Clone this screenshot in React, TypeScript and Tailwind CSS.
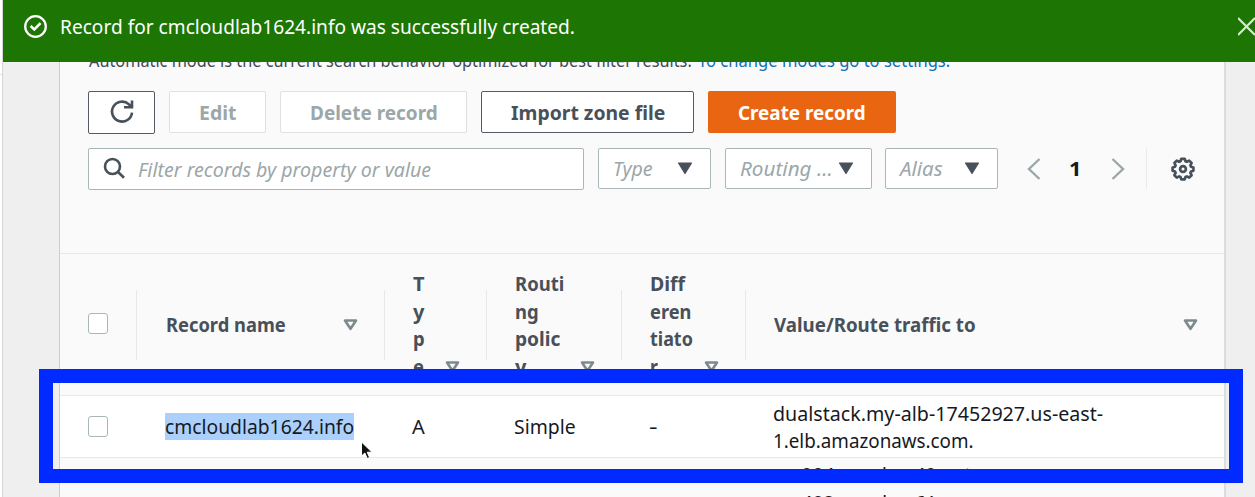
import React from "react";

// Text condensed or widened to an exact advance width so lines keep their measure.
function T({ w, children, className = "" }: { w: number; children: string; className?: string }) {
  const ref = React.useRef<HTMLSpanElement>(null);
  const [scale, setScale] = React.useState(1);
  React.useLayoutEffect(() => {
    if (ref.current) setScale(w / ref.current.offsetWidth);
  }, [w, children]);
  return (
    <span className={`block shrink-0 text-left ${className}`} style={{ width: w }}>
      <span ref={ref} className="inline-block origin-left whitespace-pre align-top" style={{ transform: `scaleX(${scale})` }}>
        {children}
      </span>
    </span>
  );
}

function Caret({ className = "" }: { className?: string }) {
  return (
    <svg className={`shrink-0 ${className}`} width="16" height="13" viewBox="0 0 16 13">
      <path d="M1.500 1h13L8 11.500z" fill="#485059" stroke="#485059" strokeWidth="1.2" strokeLinejoin="round" />
    </svg>
  );
}

function Sort() {
  return (
    <svg className="shrink-0" width="15" height="12" viewBox="0 0 15 12">
      <path d="M2 1.500h11L7.500 9.800z" fill="none" stroke="#7d8a8b" strokeWidth="2.600" strokeLinejoin="round" />
    </svg>
  );
}

function Checkbox() {
  return <span className="block h-[21px] w-5 rounded-[3px] border-[1.5px] border-[#aab7b8] bg-white" />;
}

function Filter({ label, w, className }: { label: string; w: number; className: string }) {
  return (
    <div className={`flex h-[41px] items-center justify-between rounded-[2px] border border-[#aab7b8] bg-white pl-[14px] pr-[17px] text-[20px] italic text-[#9ba7a8] ${className}`}>
      <T w={w}>{label}</T>
      <Caret />
    </div>
  );
}

function Heading({ lines, className }: { lines: [string, number][]; className: string }) {
  return (
    <div className={`flex h-[141px] justify-between pt-[16px] ${className}`}>
      <div className="flex flex-col leading-[27.7px]">
        {lines.map(([t, w]) => <T key={t} w={w}>{t}</T>)}
      </div>
      <div className="mt-[91px]"><Sort /></div>
    </div>
  );
}

function Divider() {
  return <div className="mt-[36px] h-[70px] w-px shrink-0 bg-[#e6e9e9]" />;
}

export default function App() {
  return (
    <div className="relative h-[497px] w-[1255px] overflow-hidden bg-[#efefef] font-['Noto_Sans','Open_Sans',sans-serif] text-[20px] text-[#16191f]">
      <div className="flex h-[62px]">
        <div className="w-[3px] shrink-0 border-r border-[#d5d5d5] bg-white" />
        <header className="flex flex-1 items-center bg-[#1d7603] pb-[9px] text-white">
          <svg className="ml-[20px] shrink-0" width="26" height="26" viewBox="0 0 26 26" fill="none" stroke="#fff">
            <circle cx="12.500" cy="12.500" r="10.300" strokeWidth="2.300" />
            <path d="m7.600 12 3.700 3.500 6.200-6.300" strokeWidth="2.500" />
          </svg>
          <T w={515} className="ml-[11px] pt-px">Record for cmcloudlab1624.info was successfully created.</T>
          <svg className="ml-auto shrink-0" width="17" height="20" viewBox="0 0 17 20" fill="none" stroke="#dbe8d7" strokeWidth="2.200">
            <path d="m0 1 17 17M17 1 0 18" />
          </svg>
        </header>
      </div>

      <div className="flex h-[435px]">
        <div className="w-[3px] shrink-0 border-r border-[#d5d5d5] bg-white">
          <div className="mt-3 h-px bg-[#e5e5e5]" />
        </div>
        <main className="ml-[56px] flex h-[435px] w-[1167px] shrink-0 flex-col overflow-hidden border-l border-r-2 border-l-[#cccfcf] border-r-[#d9dddd] bg-[#fafafa]">
          <div className="flex h-[29px] shrink-0 overflow-hidden pl-[29px] text-[18px] leading-[24px] text-[#444b55]">
            <div className="-mt-[14px] flex gap-[6px]">
              <T w={603}>Automatic mode is the current search behavior optimized for best filter results.</T>
              <T w={252} className="text-[#146eb4]">To change modes go to settings.</T>
            </div>
          </div>

          <div className="flex shrink-0 gap-[14px] pl-[28px] font-bold">
            <button className="flex h-[43px] w-[67px] items-center justify-center rounded-[2px] border border-[#545b64] bg-white">
              <svg className="-mt-[2px]" width="26" height="26" viewBox="0 0 26 26" fill="none" stroke="#485059" strokeWidth="2.600">
                <path d="M23 13.600a10 10 0 1 1-3-8.200l2.200 2.400M23 1.500v6.800h-8" />
              </svg>
            </button>
            <button className="flex h-[42px] w-[97px] items-center justify-center rounded-[2px] border border-[#dce1e1] bg-white pt-[2px] text-[#9ba7a8]"><T w={38}>Edit</T></button>
            <button className="flex h-[42px] w-[187px] items-center justify-center rounded-[2px] border border-[#dce1e1] bg-white pt-[2px] text-[#9ba7a8]"><T w={128}>Delete record</T></button>
            <button className="flex h-[42px] w-[213px] items-center justify-center rounded-[2px] border border-[#545b64] bg-white pt-[2px] text-[#485059]"><T w={154}>Import zone file</T></button>
            <button className="flex h-[42px] w-[188px] items-center justify-center rounded-[2px] bg-[#e96512] pt-[2px] text-white"><T w={128}>Create record</T></button>
          </div>

          <div className="mt-[14px] flex shrink-0 items-start pl-[28px]">
            <div className="flex h-[42px] w-[496px] items-center rounded-[2px] border border-[#aab7b8] bg-white pl-[14px] text-[#9ba7a8]">
              <svg className="shrink-0" width="24" height="24" viewBox="0 0 24 24" fill="none" stroke="#485059" strokeWidth="2.600">
                <circle cx="9.500" cy="9.500" r="7.500" /><path d="m15 15 6 5.800" />
              </svg>
              <T w={293} className="ml-[11px] pt-[2px] italic">Filter records by property or value</T>
            </div>
            <Filter label="Type" w={40} className="ml-[14px] w-[113px]" />
            <Filter label="Routing ..." w={93} className="ml-[14px] w-[147px]" />
            <Filter label="Alias" w={43} className="ml-[13px] w-[113px]" />
            <div className="flex h-[41px] items-center">
              <svg className="ml-[29px]" width="14" height="22" viewBox="0 0 14 22" fill="none" stroke="#9ba7a8" strokeWidth="2.400"><path d="M12.500 1 2 11l10.500 10" /></svg>
              <T w={12} className="ml-[28px] font-bold">1</T>
              <svg className="ml-[30px]" width="14" height="22" viewBox="0 0 14 22" fill="none" stroke="#9ba7a8" strokeWidth="2.400"><path d="M1.500 1 12 11 1.500 21" /></svg>
              <span className="ml-[21px] h-full w-px bg-[#e9ebeb]" />
              <svg className="ml-[24px]" width="24" height="24" viewBox="0 0 24 24" fill="none" stroke="#485059" strokeWidth="2.700" strokeLinejoin="round">
                <path d="M10.300 1.800h3.400l.8 2.400 1.400.6 2.300-1.200 2.400 2.400-1.200 2.300.6 1.400 2.400.8v3.200l-2.400.8-.6 1.400 1.200 2.300-2.400 2.400-2.300-1.200-1.400.6-.8 2.400h-3.400l-.8-2.400-1.400-.6-2.300 1.200-2.400-2.400 1.200-2.300-.6-1.400-2.400-.8v-3.200l2.400-.8.6-1.400-1.200-2.300 2.400-2.400 2.300 1.200 1.400-.6z" />
                <circle cx="12" cy="12" r="2.900" />
              </svg>
            </div>
          </div>

          <section className="mt-[63px] h-[143px] shrink-0 border-y border-[#e6e9e9] font-bold text-[#485059]">
            <div className="flex h-[141px]">
              <div className="w-[76px] pl-[28px] pt-[59px]"><Checkbox /></div>
              <Divider />
              <div className="flex w-[247px] items-center justify-between pl-[29px] pr-[26px]"><T w={120}>Record name</T><Sort /></div>
              <Divider />
              <Heading className="w-[101px] pl-[28px] pr-[26px]" lines={[["T", 12], ["y", 11], ["p", 12], ["e", 11]]} />
              <Divider />
              <Heading className="w-[134px] pl-[28px] pr-[26px]" lines={[["Routi", 49], ["ng", 24], ["polic", 45], ["y", 11]]} />
              <Divider />
              <Heading className="w-[123px] pl-[28px] pr-[26px]" lines={[["Diff", 35], ["eren", 41], ["tiato", 43], ["r", 8]]} />
              <Divider />
              <div className="flex flex-1 items-center justify-between pl-[28px] pr-[26px]"><T w={202}>Value/Route traffic to</T><Sort /></div>
            </div>
          </section>

          <section className="flex h-[62px] shrink-0 items-center border-b border-[#e6e9e9] bg-white">
            <div className="w-[105px] pl-[28px]"><Checkbox /></div>
            <div className="w-[247px]"><T w={189} className="h-[27px] bg-[#abd0fb] leading-[28px]">cmcloudlab1624.info</T></div>
            <div className="w-[102px]"><T w={13}>A</T></div>
            <div className="w-[135px]"><T w={62}>Simple</T></div>
            <div className="w-[124px]"><T w={8}>-</T></div>
            <div className="flex flex-col pt-px leading-[27.500px]">
              <T w={330}>dualstack.my-alb-17452927.us-east-</T>
              <T w={201}>1.elb.amazonaws.com.</T>
            </div>
          </section>
          <section className="flex shrink-0 flex-col pl-[714px] pt-[3px] leading-[27.500px]">
            <T w={203}>ns-904.awsdns-49.net.</T>
            <T w={212}>ns-482.awsdns-61.com.</T>
          </section>
        </main>
      </div>

      <div className="absolute left-[39px] top-[369px] h-[114px] w-[1204px] border-[14px] border-[#002aff]" />
      <svg className="absolute left-[360px] top-[441px]" width="14" height="20" viewBox="0 0 14 20">
        <path d="M1.500 1v14l3.300-3 2.500 5.500 2.300-1-2.400-5.300H12z" fill="#111" stroke="#fff" strokeWidth="1" />
      </svg>
    </div>
  );
}
